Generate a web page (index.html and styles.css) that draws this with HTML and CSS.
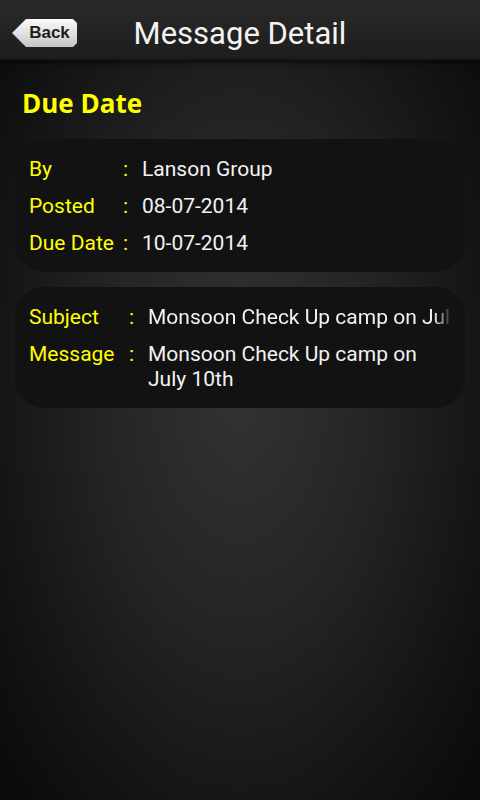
FILE: index.html
```html
<!DOCTYPE html>
<html lang="en">
<head>
    <meta charset="UTF-8">
    <meta name="viewport" content="width=device-width, initial-scale=1.0">
    <title>Message Detail</title>
    <link rel="stylesheet" href="styles.css">
</head>
<body>
    <header class="topbar">
        <button class="back-btn">Back</button>
        <h1 class="topbar-title">Message Detail</h1>
    </header>

    <main class="content">
        <h2 class="section-title">Due Date</h2>

        <div class="card card-meta">
            <div class="row">
                <span class="label">By</span>
                <span class="colon">:</span>
                <span class="value">Lanson Group</span>
            </div>
            <div class="row">
                <span class="label">Posted</span>
                <span class="colon">:</span>
                <span class="value">08-07-2014</span>
            </div>
            <div class="row">
                <span class="label">Due Date</span>
                <span class="colon">:</span>
                <span class="value">10-07-2014</span>
            </div>
        </div>

        <div class="card card-body">
            <div class="row">
                <span class="label">Subject</span>
                <span class="colon">:</span>
                <span class="value single">Monsoon Check Up camp on July 10th</span>
            </div>
            <div class="row">
                <span class="label">Message</span>
                <span class="colon">:</span>
                <span class="value">Monsoon Check Up camp on July 10th</span>
            </div>
        </div>
    </main>
</body>
</html>
```

FILE: styles.css
```css
html, body {
    height: 100%;
}
body {
    margin: 0;
    font-family: Roboto, "Noto Sans", sans-serif;
    color: #fff;
    background-color: #0e0e0e;
    background-image: radial-gradient(ellipse 65% 70% at 50% 48%, #333 0%, #242424 45%, #141414 80%, #0c0c0c 100%);
}
.topbar {
    position: relative;
    height: 60px;
    display: flex;
    align-items: center;
    justify-content: center;
    background: linear-gradient(#2a2a2a, #1d1d1d);
    box-shadow: 0 2px 6px rgba(0, 0, 0, 0.7);
    border-bottom: 1px solid #141414;
    box-sizing: border-box;
}
.topbar-title {
    margin: 0;
    padding-top: 8px;
    font-size: 31px;
    font-weight: 400;
    color: #f4f4f4;
    line-height: 1;
}
.back-btn {
    position: absolute;
    left: 12px;
    top: 19px;
    width: 65px;
    height: 28px;
    padding: 0 0 0 10px;
    border: none;
    font-family: "Liberation Sans", Arial, sans-serif;
    font-weight: 700;
    font-size: 17px;
    color: #1c1c1c;
    background: linear-gradient(#fafafa, #e2e2e2 50%, #c4c4c4);
    clip-path: polygon(0 50%, 14px 0, calc(100% - 4px) 0, 100% 4px, 100% calc(100% - 4px), calc(100% - 4px) 100%, 14px 100%);
    cursor: pointer;
}
.content {
    padding: 25px 15px;
}
.section-title {
    margin: 0 0 18px 7px;
    font-family: "Open Sans", "Liberation Sans", sans-serif;
    font-weight: 700;
    font-size: 26px;
    line-height: 36px;
    color: #ffff00;
}
.card {
    background-color: #121212;
    border-radius: 30px;
    padding: 18px 13px 16px 14px;
    margin-bottom: 15px;
    display: flex;
    flex-direction: column;
    gap: 12px;
}
.row {
    display: grid;
    font-size: 21px;
    line-height: 25px;
}
.card-meta .row {
    grid-template-columns: 94px 19px 1fr;
}
.card-body .row {
    grid-template-columns: 100px 19px 1fr;
}
.label, .colon {
    color: #ffff00;
}
.value {
    color: #f2f2f2;
    min-width: 0;
}
.value.single {
    white-space: nowrap;
    overflow: hidden;
    -webkit-mask-image: linear-gradient(to right, #000 calc(100% - 18px), transparent);
    mask-image: linear-gradient(to right, #000 calc(100% - 18px), transparent);
}
```
